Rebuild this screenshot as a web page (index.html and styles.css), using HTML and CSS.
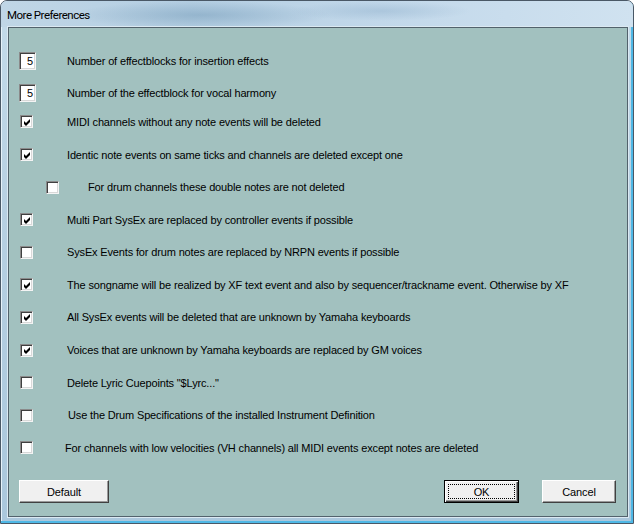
FILE: index.html
```html
<!DOCTYPE html>
<html>
<head>
<meta charset="utf-8">
<link rel="stylesheet" href="styles.css">
</head>
<body>
<div class="window">
  <div class="titlebar"><span class="title">More Preferences</span></div>
  <div class="client">
    <div class="rows">
      <div class="row num-row"><span class="ctl"><span class="num">5</span></span><span class="label">Number of effectblocks for insertion effects</span></div>
      <div class="row num-row"><span class="ctl"><span class="num">5</span></span><span class="label">Number of the effectblock for vocal harmony</span></div>
      <div class="row check-row tight"><span class="ctl"><span class="cb checked"><svg width="7" height="7" viewBox="0 0 7 7"><polygon points="0,2 2,4 6,0 6,3 2,7 0,5" fill="#000"/></svg></span></span><span class="label">MIDI channels without any note events will be deleted</span></div>
      <div class="row check-row"><span class="ctl"><span class="cb checked"><svg width="7" height="7" viewBox="0 0 7 7"><polygon points="0,2 2,4 6,0 6,3 2,7 0,5" fill="#000"/></svg></span></span><span class="label">Identic note events on same ticks and channels are deleted except one</span></div>
      <div class="row check-row nested"><span class="ctl"><span class="cb"></span></span><span class="label">For drum channels these double notes are not deleted</span></div>
      <div class="row check-row"><span class="ctl"><span class="cb checked"><svg width="7" height="7" viewBox="0 0 7 7"><polygon points="0,2 2,4 6,0 6,3 2,7 0,5" fill="#000"/></svg></span></span><span class="label">Multi Part SysEx are replaced by controller events if possible</span></div>
      <div class="row check-row"><span class="ctl"><span class="cb"></span></span><span class="label">SysEx Events for drum notes are replaced by NRPN events if possible</span></div>
      <div class="row check-row"><span class="ctl"><span class="cb checked"><svg width="7" height="7" viewBox="0 0 7 7"><polygon points="0,2 2,4 6,0 6,3 2,7 0,5" fill="#000"/></svg></span></span><span class="label">The songname will be realized by XF text event and also by sequencer/trackname event. Otherwise by XF</span></div>
      <div class="row check-row"><span class="ctl"><span class="cb checked"><svg width="7" height="7" viewBox="0 0 7 7"><polygon points="0,2 2,4 6,0 6,3 2,7 0,5" fill="#000"/></svg></span></span><span class="label">All SysEx events will be deleted that are unknown by Yamaha keyboards</span></div>
      <div class="row check-row"><span class="ctl"><span class="cb checked"><svg width="7" height="7" viewBox="0 0 7 7"><polygon points="0,2 2,4 6,0 6,3 2,7 0,5" fill="#000"/></svg></span></span><span class="label">Voices that are unknown by Yamaha keyboards are replaced by GM voices</span></div>
      <div class="row check-row"><span class="ctl"><span class="cb"></span></span><span class="label">Delete Lyric Cuepoints "$Lyrc..."</span></div>
      <div class="row check-row"><span class="ctl"><span class="cb"></span></span><span class="label shift-right">Use the Drum Specifications of the installed Instrument Definition</span></div>
      <div class="row check-row"><span class="ctl"><span class="cb"></span></span><span class="label shift-left">For channels with low velocities (VH channels) all MIDI events except notes are deleted</span></div>
    </div>
    <div class="buttons">
      <button class="btn btn-default-action">Default</button>
      <span class="spacer"></span>
      <button class="btn btn-ok"><span class="focus">OK</span></button>
      <button class="btn btn-cancel">Cancel</button>
    </div>
  </div>
</div>
</body>
</html>
```
FILE: styles.css
```css
html, body {
  margin: 0;
  padding: 0;
  background: #ffffff;
}

.window {
  width: 634px;
  height: 524px;
  box-sizing: border-box;
  display: flex;
  flex-direction: column;
  border: 1px solid #4a5866;
  border-radius: 7px 7px 0 0;
  background: linear-gradient(180deg, #c4dbea 0%, #b7d0e2 40%, #aac7dc 100%);
  box-shadow: inset -2px -2px 0 #4fb8e6, inset 1px 1px 0 #e6f2fa;
  overflow: hidden;
}

.titlebar {
  height: 26px;
  flex: none;
  display: flex;
  align-items: center;
  padding-left: 6px;
  background:
    radial-gradient(ellipse 130px 14px at 200px 14px, rgba(110, 150, 180, 0.45), rgba(110, 150, 180, 0) 100%),
    radial-gradient(ellipse 90px 10px at 380px 10px, rgba(130, 165, 195, 0.35), rgba(130, 165, 195, 0) 100%),
    linear-gradient(90deg, #c0d6e6 0%, #b4cee2 30%, #c2d8ea 60%, #d0e2f0 100%);
}

.title {
  font-family: Roboto, "Liberation Sans", sans-serif;
  font-size: 11.5px;
  letter-spacing: -0.5px;
  color: #000;
  margin-top: 2px;
}

.client {
  flex: 1;
  margin: 0 5px 6px 7px;
  background: #a2c1bf;
  border: 1px solid #52626c;
  box-shadow: 0 0 0 1px #dbe9f2;
  display: flex;
  flex-direction: column;
  font-family: "Liberation Sans", Arial, sans-serif;
  font-size: 11px;
  letter-spacing: -0.15px;
  color: #000;
}

.rows {
  padding: 17px 0 0 10px;
  display: flex;
  flex-direction: column;
}

.row {
  display: flex;
  align-items: center;
}

.num-row {
  height: 32px;
}

.check-row {
  height: 32.6px;
}

.tight {
  margin-top: -3.4px;
}

.ctl {
  width: 48px;
  flex: none;
  display: flex;
  align-items: center;
}

.nested .ctl {
  width: 69px;
}

.nested .cb {
  margin-left: 27px;
}

.label {
  white-space: nowrap;
}

.shift-right {
  margin-left: 1px;
}

.shift-left {
  margin-left: -2px;
}

.num {
  width: 17px;
  height: 18px;
  box-sizing: border-box;
  background: #fff;
  border-top: 1px solid #8a8a8a;
  border-left: 1px solid #8a8a8a;
  border-right: 1px solid #f4f4f4;
  border-bottom: 1px solid #f4f4f4;
  box-shadow: inset 1px 1px 0 #404040, inset -1px -1px 0 #d8d8d8;
  text-align: right;
  padding-right: 2px;
  line-height: 16px;
  font-size: 11px;
}

.cb {
  width: 13px;
  height: 13px;
  box-sizing: border-box;
  margin-left: 1px;
  background: #fff;
  border-top: 1px solid #8a8a8a;
  border-left: 1px solid #8a8a8a;
  border-right: 1px solid #f4f4f4;
  border-bottom: 1px solid #f4f4f4;
  box-shadow: inset 1px 1px 0 #404040, inset -1px -1px 0 #d8d8d8;
  display: flex;
  align-items: center;
  justify-content: center;
}

.cb svg {
  display: block;
  margin: 1px 0 0 1px;
}

.buttons {
  display: flex;
  align-items: flex-start;
  margin-top: 16px;
  padding: 0 11px 0 10px;
}

.spacer {
  flex: 1;
}

.btn {
  height: 23px;
  box-sizing: border-box;
  background: #f0f0f0;
  border-top: 1px solid #ffffff;
  border-left: 1px solid #ffffff;
  border-right: 1px solid #404040;
  border-bottom: 1px solid #404040;
  box-shadow: inset -1px -1px 0 #9a9a9a;
  font-family: "Liberation Sans", Arial, sans-serif;
  font-size: 11px;
  letter-spacing: -0.1px;
  color: #000;
  padding: 0;
  margin: 0;
}

.btn-default-action {
  width: 90px;
}

.btn-ok {
  width: 75px;
  margin-right: 23px;
  border: 1px solid #000;
  box-shadow: inset 1px 1px 0 #fff, inset -1px -1px 0 #404040, inset -2px -2px 0 #9a9a9a;
  padding: 3px;
  display: flex;
}

.focus {
  flex: 1;
  border: 1px dotted #000;
  display: flex;
  align-items: center;
  justify-content: center;
}

.btn-cancel {
  width: 74px;
}
```
